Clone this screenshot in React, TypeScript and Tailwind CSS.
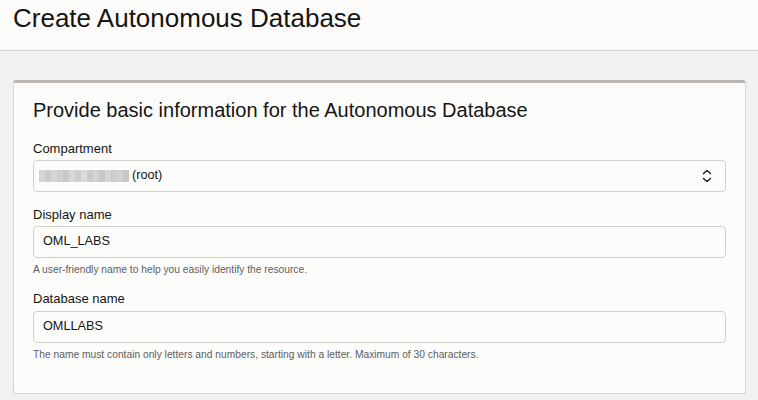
import React from "react";

const Chevrons = () => (
  <svg width="12" height="16" viewBox="0 0 12 16" fill="none" stroke="#161513" strokeWidth="1.4" strokeLinecap="round" strokeLinejoin="round">
    <path d="M2.5 5.5 L6 2.5 L9.5 5.5" />
    <path d="M2.5 10.5 L6 13.5 L9.5 10.5" />
  </svg>
);

const Redacted = () => {
  const shades = ["#d6d4d2", "#cfcdcb", "#dad8d6", "#d2d0ce", "#cbc9c7", "#d8d6d4", "#d0cecc", "#dcdad8", "#cdcbc9", "#d4d2d0", "#c9c7c5", "#d7d5d3", "#cfcdcb", "#d3d1cf", "#cac8c6"];
  return (
    <div className="flex h-[12px] w-[90px] overflow-hidden">
      {shades.map((c, i) => (
        <div key={i} className="h-full flex-1" style={{ backgroundColor: c }} />
      ))}
    </div>
  );
};

export default function App() {
  return (
    <div className="w-[758px] h-[400px] overflow-hidden bg-[#f2f1f0] font-['Liberation_Sans',Arial,sans-serif] text-[#161513]">
      <div className="h-[51px] bg-[#fcfbfa] border-b border-[#d4d2cf] pl-[13px] pt-[3px]">
        <h1 className="text-[26px] leading-[30px]">Create Autonomous Database</h1>
      </div>
      <div className="pt-[29px] pl-[13px] pr-[12px]">
        <div className="bg-[#fcfcfb] border border-[#d9d7d4] border-t-[3px] border-t-[#bab6b1] rounded-[3px] h-[314px] px-[19px] pt-[14px]">
          <h2 className="text-[20px] leading-[26px]">Provide basic information for the Autonomous Database</h2>
          <div className="mt-[17px] text-[13px] leading-[18px]">Compartment</div>
          <div className="mt-[2px] h-[32px] rounded-[4px] border border-[#d2d0cd] bg-[#fcfcfb] flex items-center pl-[5px] pr-[12px]">
            <Redacted />
            <span className="ml-[3px] text-[12.7px]">(root)</span>
            <div className="ml-auto"><Chevrons /></div>
          </div>
          <div className="mt-[14px] text-[13px] leading-[18px]">Display name</div>
          <div className="mt-[2px] h-[32px] rounded-[4px] border border-[#d2d0cd] bg-[#fcfcfb] flex items-center pl-[9px] text-[12.7px]">OML_LABS</div>
          <div className="mt-[4px] text-[10.25px] leading-[16px] text-[#5f5d5b]">A user-friendly name to help you easily identify the resource.</div>
          <div className="mt-[12px] text-[13px] leading-[18px]">Database name</div>
          <div className="mt-[3px] h-[32px] rounded-[4px] border border-[#d2d0cd] bg-[#fcfcfb] flex items-center pl-[9px] text-[12.7px]">OMLLABS</div>
          <div className="mt-[4px] text-[10.25px] leading-[16px] text-[#5f5d5b]">The name must contain only letters and numbers, starting with a letter. Maximum of 30 characters.</div>
        </div>
      </div>
    </div>
  );
}
